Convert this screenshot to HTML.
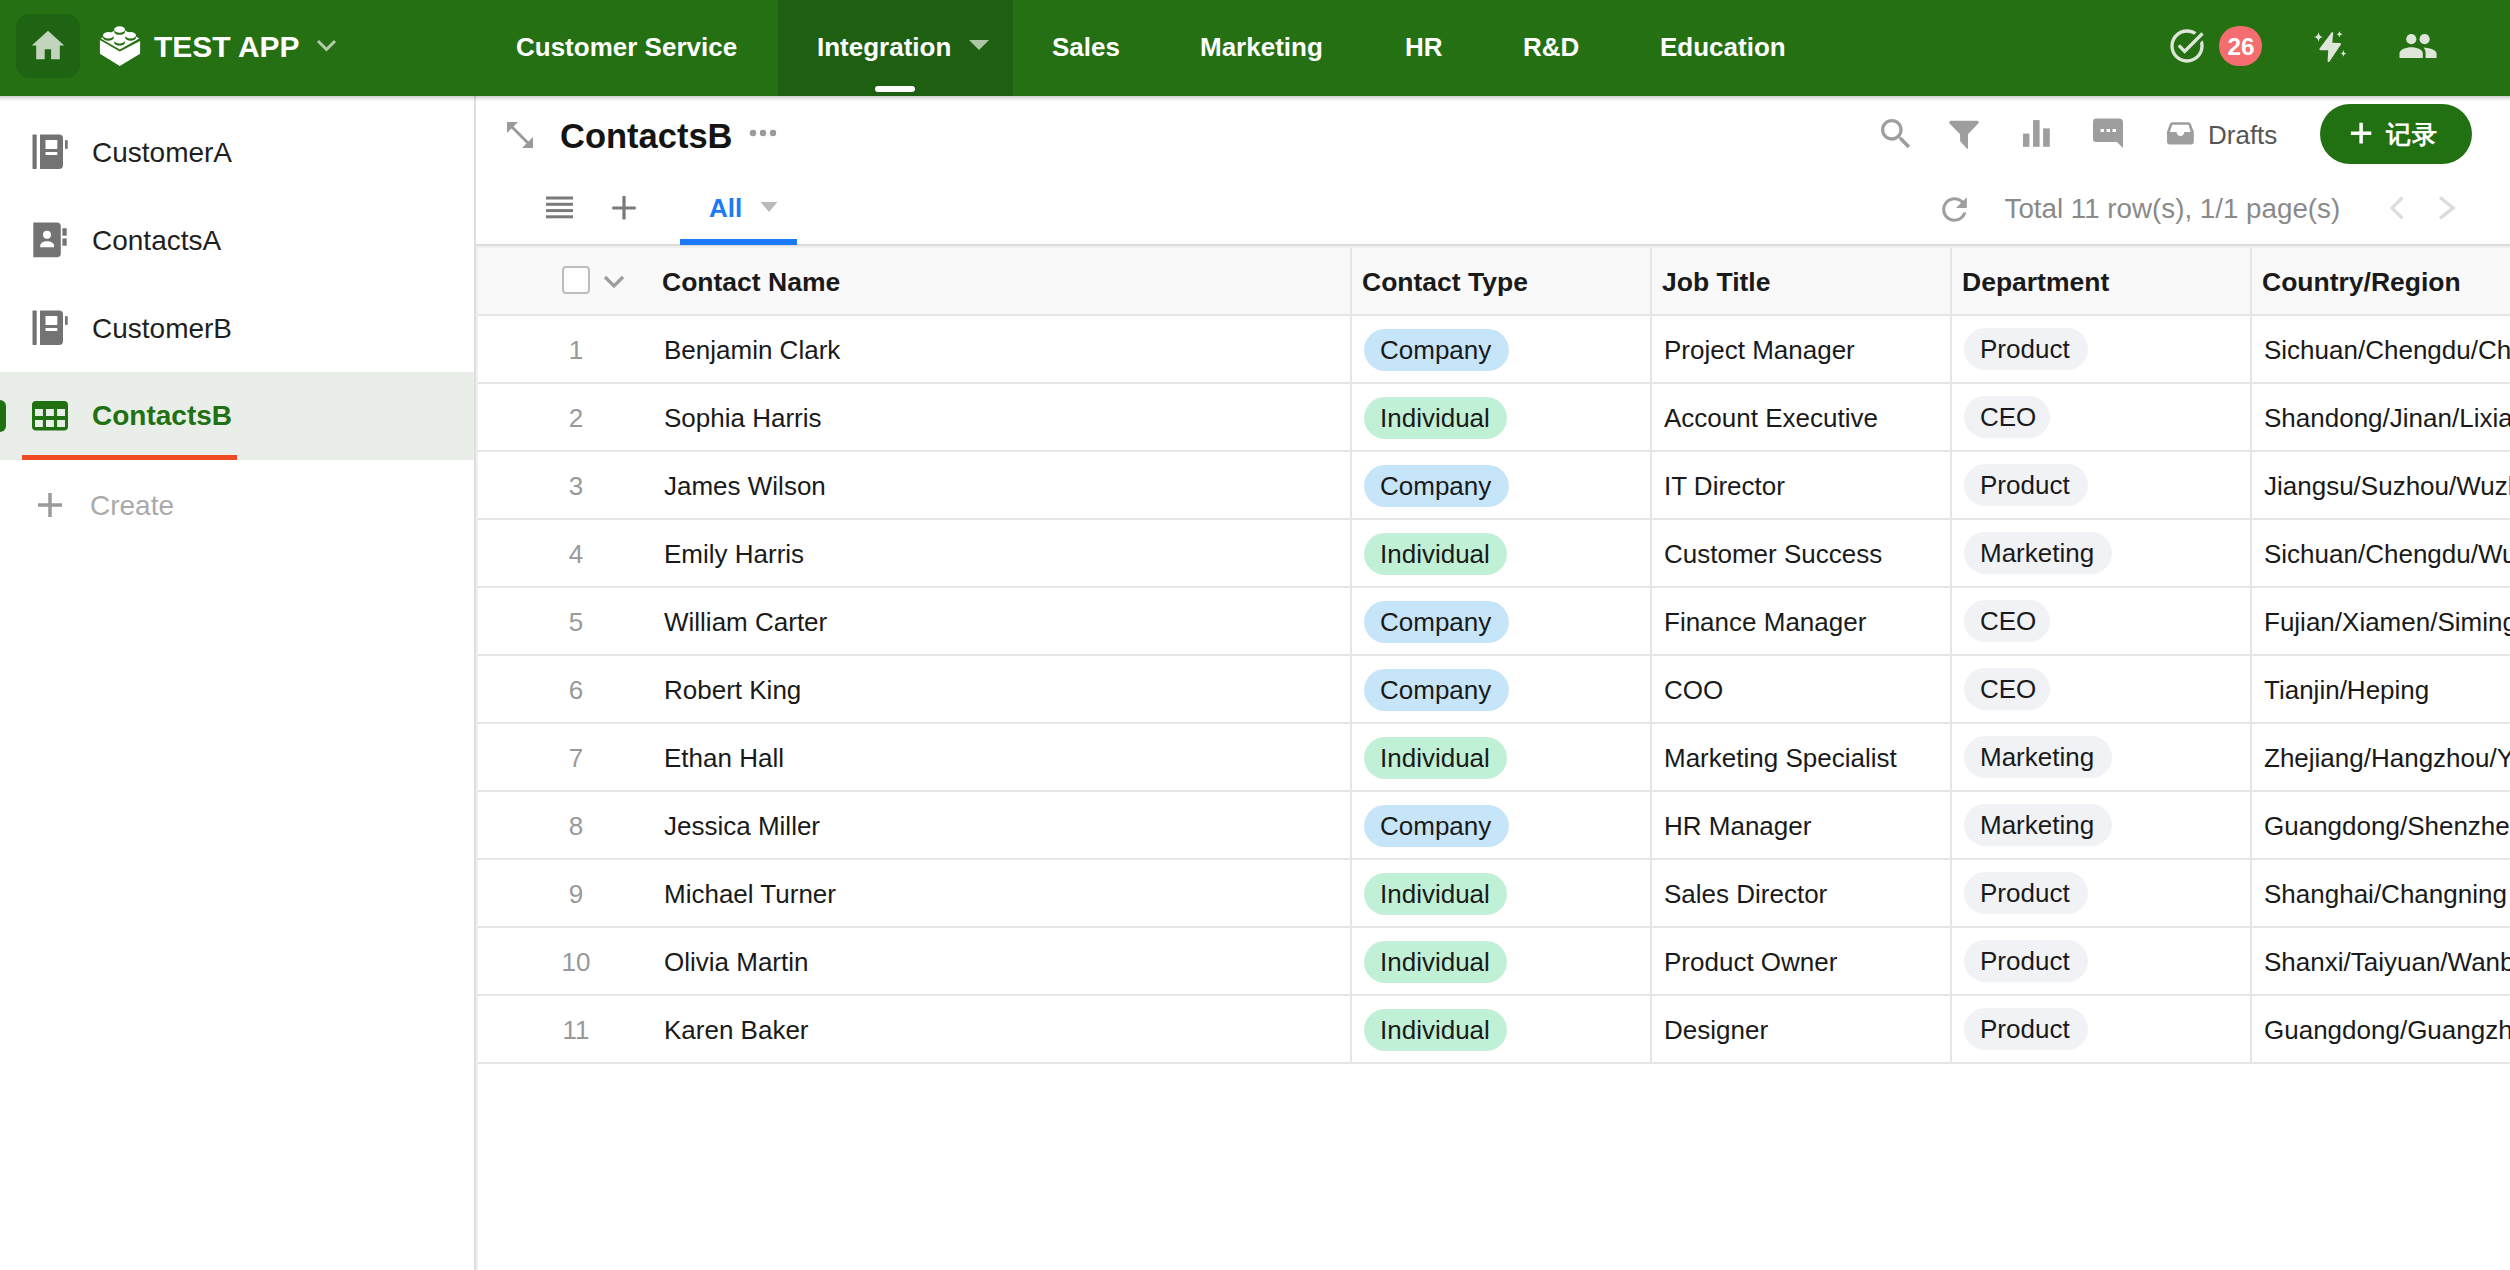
<!DOCTYPE html>
<html><head><meta charset="utf-8"><title>ContactsB</title>
<style>
*{box-sizing:border-box;margin:0;padding:0}
html,body{width:2510px;height:1270px;overflow:hidden;background:#fff;font-family:"Liberation Sans",sans-serif;color:#1a1a1a}
.t{position:absolute;line-height:40px;height:40px;white-space:nowrap}
.a{position:absolute}
svg{position:absolute;overflow:visible}
#hdr{position:absolute;left:0;top:0;width:2510px;height:96px;background:#247013}
#shadow{position:absolute;left:0;top:96px;width:2510px;height:6px;z-index:3;background:linear-gradient(rgba(0,0,0,.2),rgba(0,0,0,.06) 55%,rgba(0,0,0,0))}
.pill{position:absolute;height:42px;border-radius:21px}
</style></head><body>
<div id="hdr"><div class="a" style="left:16px;top:14px;width:64px;height:64px;border-radius:14px;background:#1f6412"></div><svg style="left:31px;top:30px" width="34" height="30" viewBox="0 0 34 30"><path d="M17 0.8 L0.8 15.6 H5.2 V29.2 H13.7 V19.3 H20.1 V29.2 H28.8 V15.6 H33.2 Z" fill="#c3d4bc"/></svg><svg style="left:95px;top:20px" width="50" height="50" viewBox="0 0 50 50">
<path d="M4.9 20.1 L24.8 31.5 L45.1 20.9 V33.7 L24.8 45.9 L4.9 33.7 Z" fill="#fff"/>
<path d="M5.7 18.5 L24.8 7.5 L44.3 18.4 L24.8 29.4 Z" fill="#fff"/>
<g>
<ellipse cx="24.6" cy="11.65" rx="5.4" ry="3.2" fill="#247013"/><ellipse cx="24.6" cy="9.45" rx="5.4" ry="3.2" fill="#fff"/>
<ellipse cx="13.4" cy="17.5" rx="5.4" ry="3.2" fill="#247013"/><ellipse cx="13.4" cy="15.2" rx="5.4" ry="3.2" fill="#fff"/>
<ellipse cx="35.6" cy="17.5" rx="5.4" ry="3.2" fill="#247013"/><ellipse cx="35.6" cy="15.2" rx="5.4" ry="3.2" fill="#fff"/>
<ellipse cx="24.6" cy="22.4" rx="5.4" ry="3.2" fill="#247013"/><ellipse cx="24.6" cy="20.2" rx="5.4" ry="3.2" fill="#fff"/>
</g>
</svg><div class="t" style="left:154px;top:26.8px;font-size:30px;font-weight:700;color:#fff;">TEST APP</div>
<svg style="left:316px;top:39px" width="21" height="13" viewBox="0 0 21 13"><path d="M2 2 L10.5 10.5 L19 2" fill="none" stroke="#b3ccab" stroke-width="3"/></svg><div class="a" style="left:778px;top:0;width:235px;height:96px;background:#1f5f12"></div><div class="a" style="left:875px;top:86px;width:40px;height:6px;border-radius:3px;background:#fff"></div><div class="t" style="left:516px;top:27.2px;font-size:26px;font-weight:700;color:#fff;">Customer Service</div>
<div class="t" style="left:817px;top:27.2px;font-size:26px;font-weight:700;color:#fff;">Integration</div>
<div class="t" style="left:1052px;top:27.2px;font-size:26px;font-weight:700;color:#fff;">Sales</div>
<div class="t" style="left:1200px;top:27.2px;font-size:26px;font-weight:700;color:#fff;">Marketing</div>
<div class="t" style="left:1405px;top:27.2px;font-size:26px;font-weight:700;color:#fff;">HR</div>
<div class="t" style="left:1523px;top:27.2px;font-size:26px;font-weight:700;color:#fff;">R&amp;D</div>
<div class="t" style="left:1660px;top:27.2px;font-size:26px;font-weight:700;color:#fff;">Education</div>
<svg style="left:968px;top:39px" width="22" height="12" viewBox="0 0 22 12"><path d="M1 1 H21 L11 11 Z" fill="#adc6a6"/></svg><svg style="left:2167px;top:26px" width="40" height="40" viewBox="0 0 24 24"><path fill="#dde6d9" d="M22 5.18L10.59 16.6l-4.24-4.24 1.41-1.41 2.83 2.83 10-10L22 5.18zm-2.21 5.04c.13.57.21 1.17.21 1.78 0 4.42-3.58 8-8 8s-8-3.58-8-8 3.58-8 8-8c1.58 0 3.04.46 4.28 1.25l1.44-1.44C16.1 2.67 14.130 2 12 2 6.48 2 2 6.48 2 12s4.48 10 10 10 10-4.48 10-10c0-1.19-.22-2.33-.6-3.39l-1.61 1.61z"/></svg><div class="a" style="left:2219px;top:26px;width:43px;height:40px;border-radius:20px;background:#f56d6f"></div><div class="t" style="left:2227.5px;top:27.2px;font-size:24.3px;font-weight:700;color:#fff;">26</div>
<svg style="left:2300px;top:20px" width="60" height="50" viewBox="0 0 60 50">
<path d="M31.5 12.5 Q32.5 11.2 33.2 12.8 L32.3 22.8 L40 23 Q41.5 23.3 40.8 24.8 L29.5 41.5 Q28.2 42.8 27.6 41.2 L28.2 30.2 L20.5 30.2 Q18.6 30 19.6 28.5 Z" fill="#dde6d9"/>
<path d="M18.5 12 Q19 16.5 23 17 Q19 17.5 18.5 22 Q18 17.5 14 17 Q18 16.5 18.5 12 Z" fill="#dde6d9"/>
<path d="M39.4 11 Q39.7 13.9 42.4 14.3 Q39.7 14.7 39.4 17.6 Q39.1 14.7 36.3 14.3 Q39.1 13.9 39.4 11 Z" fill="#dde6d9"/>
<path d="M43.4 30.2 Q43.7 33.1 46.4 33.5 Q43.7 33.9 43.4 36.8 Q43.1 33.9 40.3 33.5 Q43.1 33.1 43.4 30.2 Z" fill="#dde6d9"/>
</svg><svg style="left:2398px;top:33px" width="40" height="26" viewBox="0 0 40 26">
<circle cx="13.3" cy="6.2" r="5.1" fill="#dde6d9"/>
<circle cx="26.6" cy="6.2" r="5.1" fill="#dde6d9"/>
<path d="M1.5 25 V20.5 C1.5 16.5 8 14.3 13.2 14.3 C18.5 14.3 24.8 16.5 24.8 20.5 V25 Z" fill="#dde6d9"/>
<path d="M25.5 14.6 C31 14.9 38.6 16.8 38.6 20.8 V25 H27.6 V20.5 C27.6 18 26.8 16 25.5 14.6 Z" fill="#dde6d9"/>
</svg></div><div id="shadow"></div><div class="a" style="left:474px;top:96px;width:2px;height:1174px;background:#dedede"></div><div class="a" style="left:0;top:372px;width:474px;height:88px;background:#e9eee8"></div><div class="a" style="left:-6px;top:400px;width:12px;height:32px;border-radius:6px;background:#217012"></div><div class="a" style="left:22px;top:455px;width:215px;height:5px;background:#ef4a24"></div><svg style="left:32px;top:134px" width="36" height="36" viewBox="0 0 36 36"><g fill="#737373">
<rect x="0.5" y="0.4" width="4.2" height="34.7" rx="0.8"/>
<path d="M8 0.4 H27 Q31 0.4 31 4.4 V31.1 Q31 35.1 27 35.1 H8 Z M13.5 6 V15 H25.3 V6 Z M13.5 18 V21.1 H25.3 V18 Z" fill-rule="evenodd"/>
<rect x="33" y="6.2" width="2.7" height="8.6"/>
</g></svg><div class="t" style="left:92px;top:132.8px;font-size:28px;font-weight:400;color:#1f1f1f;">CustomerA</div>
<svg style="left:32px;top:222px" width="36" height="36" viewBox="0 0 36 36"><g fill="#737373">
<path d="M1.3 0.5 H24.8 Q28.8 0.5 28.8 4.5 V31.3 Q28.8 35.3 24.8 35.3 H1.3 Z" />
<rect x="30.4" y="6.2" width="4.3" height="7.5"/>
<rect x="30.4" y="16.4" width="4.3" height="7.3"/>
</g>
<circle cx="15" cy="12.7" r="4" fill="#fff"/>
<path d="M8.2 25.3 V23.8 C8.2 20.5 12 19.2 15 19.2 C18 19.2 22.1 20.5 22.1 23.8 V25.3 Z" fill="#fff"/>
</svg><div class="t" style="left:92px;top:220.8px;font-size:28px;font-weight:400;color:#1f1f1f;">ContactsA</div>
<svg style="left:32px;top:310px" width="36" height="36" viewBox="0 0 36 36"><g fill="#737373">
<rect x="0.5" y="0.4" width="4.2" height="34.7" rx="0.8"/>
<path d="M8 0.4 H27 Q31 0.4 31 4.4 V31.1 Q31 35.1 27 35.1 H8 Z M13.5 6 V15 H25.3 V6 Z M13.5 18 V21.1 H25.3 V18 Z" fill-rule="evenodd"/>
<rect x="33" y="6.2" width="2.7" height="8.6"/>
</g></svg><div class="t" style="left:92px;top:308.8px;font-size:28px;font-weight:400;color:#1f1f1f;">CustomerB</div>
<svg style="left:32px;top:401px" width="36" height="30" viewBox="0 0 36 30">
<path fill="#217012" fill-rule="evenodd" d="M4 0 H32 Q36 0 36 4 V25.6 Q36 29.6 32 29.6 H4 Q0 29.6 0 25.6 V4 Q0 0 4 0 Z M3 7.9 V15 H10.9 V7.9 Z M14 7.9 V15 H21.9 V7.9 Z M25.1 7.9 V15 H33 V7.9 Z M3 18.9 V26 H10.9 V18.9 Z M14 18.9 V26 H21.9 V18.9 Z M25.1 18.9 V26 H33 V18.9 Z"/>
</svg><div class="t" style="left:92px;top:396.1px;font-size:28px;font-weight:700;color:#217012;">ContactsB</div>
<svg style="left:37px;top:492px" width="26" height="26" viewBox="0 0 26 26"><path d="M13 1 V25 M1 13 H25" stroke="#9b9b9b" stroke-width="3.5"/></svg><div class="t" style="left:90px;top:485.9px;font-size:28px;font-weight:400;color:#aaaaaa;">Create</div>
<svg style="left:506px;top:121px" width="28" height="28" viewBox="0 0 28 28"><g fill="#9a9a9a">
<path d="M1 1 H12 L1 12 Z"/><path d="M27 27 H16 L27 16 Z"/>
<path d="M4.5 6.6 L6.6 4.5 L23.5 21.4 L21.4 23.5 Z"/>
</g></svg><div class="t" style="left:560px;top:115.8px;font-size:34.5px;font-weight:700;color:#141414;">ContactsB</div>
<svg style="left:749px;top:127px" width="30" height="12" viewBox="0 0 30 12"><g fill="#9a9a9a"><circle cx="4" cy="6" r="3.2"/><circle cx="14" cy="6" r="3.2"/><circle cx="24" cy="6" r="3.2"/></g></svg><svg style="left:1876px;top:114px" width="40" height="40" viewBox="0 0 24 24"><path fill="#9e9e9e" d="M15.5 14h-.79l-.28-.27C15.41 12.59 16 11.11 16 9.5 16 5.91 13.09 3 9.5 3S3 5.91 3 9.5 5.91 16 9.5 16c1.61 0 3.09-.59 4.23-1.57l.27.28v.79l5 4.99L20.49 19l-4.99-5zm-6 0C7.010 14 5 11.99 5 9.5S7.01 5 9.5 5 14 7.01 14 9.5 11.99 14 9.5 14z"/></svg><svg style="left:1948px;top:120px" width="32" height="30" viewBox="0 0 32 30"><path fill="#9e9e9e" d="M1.5 3.5 Q0.5 1 3 0.8 H29 Q31.5 1 30.4 3.3 L20 14.3 V28 Q19.8 29.6 18.7 28.4 L12.1 21 V14.3 Z"/></svg><svg style="left:2022px;top:120px" width="30" height="28" viewBox="0 0 30 28"><g fill="#9e9e9e"><rect x="1" y="13.6" width="6.4" height="13.2"/><rect x="11" y="0.1" width="6.6" height="26.7"/><rect x="21.1" y="8.4" width="6.7" height="18.4"/></g></svg><svg style="left:2092px;top:118px" width="32" height="32" viewBox="0 0 32 32"><path fill="#9e9e9e" fill-rule="evenodd" d="M4 0.5 H27 Q31 0.5 31 4.5 V30 L25 24 H4 Q1 24 1 21 V4.5 Q1 0.5 4 0.5 Z M8.6 10.9 V14 H12 V10.9 Z M14.6 10.9 V14 H18 V10.9 Z M20.5 10.9 V14 H24 V10.9 Z"/></svg><svg style="left:2166px;top:121px" width="28" height="25" viewBox="0 0 28 25"><path fill="#9e9e9e" fill-rule="evenodd" d="M6 1.2 H22.6 Q24.2 1.2 24.8 3 L27.8 10.8 V20.6 Q27.8 23.6 24.8 23.6 H4 Q1 23.6 1 20.6 V10.8 L3.8 3 Q4.4 1.2 6 1.2 Z M6.3 3.8 H22.5 L24.6 11 H18.3 Q17.8 15 14.4 15 Q11 15 10.5 11 H3.8 Z"/></svg><div class="t" style="left:2208px;top:115.1px;font-size:26px;font-weight:400;color:#555555;">Drafts</div>
<div class="a" style="left:2320px;top:104px;width:152px;height:60px;border-radius:30px;background:#217012"></div><svg style="left:2350px;top:122px" width="22" height="22" viewBox="0 0 22 22"><path d="M11.1 0.8 V21.5 M0.9 11.2 H21.3" stroke="#fff" stroke-width="3.5"/></svg><div class="t" style="left:2385.5px;top:114.0px;font-size:25px;font-weight:600;color:#fff;letter-spacing:1.5px">记录</div>
<svg style="left:545px;top:195px" width="30" height="26" viewBox="0 0 30 26"><g fill="#7a7a7a"><rect x="1" y="1.5" width="27" height="3"/><rect x="1" y="7.8" width="27" height="3"/><rect x="1" y="14.1" width="27" height="3"/><rect x="1" y="20.3" width="27" height="3"/></g></svg><svg style="left:610px;top:194px" width="28" height="28" viewBox="0 0 28 28"><path d="M14 2 V25.6 M2.3 14 H25.7" stroke="#7a7a7a" stroke-width="3.2"/></svg><div class="t" style="left:709px;top:188.2px;font-size:26px;font-weight:700;color:#1a7af8;">All</div>
<svg style="left:760px;top:201px" width="18" height="12" viewBox="0 0 18 12"><path d="M0.5 1 H17.5 L9 11 Z" fill="#bbbbbb"/></svg><svg style="left:1936px;top:191px" width="37" height="37" viewBox="0 0 24 24"><path fill="#9e9e9e" d="M17.65 6.35C16.2 4.9 14.21 4 12 4c-4.42 0-7.99 3.58-7.99 8s3.57 8 7.99 8c3.73 0 6.84-2.55 7.73-6h-2.08c-.82 2.33-3.04 4-5.65 4-3.31 0-6-2.690-6-6s2.69-6 6-6c1.66 0 3.14.69 4.22 1.78L13 11h7V4l-2.35 2.35z"/></svg><div class="t" style="left:2004.5px;top:188.6px;font-size:27.75px;font-weight:400;color:#8a8a8a;">Total 11 row(s), 1/1 page(s)</div>
<svg style="left:2388px;top:195px" width="18" height="26" viewBox="0 0 18 26"><path d="M14.5 2.5 L4 12.9 L14.5 23.3" fill="none" stroke="#dcdcdc" stroke-width="3.2"/></svg><svg style="left:2437px;top:195px" width="20" height="26" viewBox="0 0 20 26"><path d="M3 2.5 L16.2 12.9 L3 23.3" fill="none" stroke="#dcdcdc" stroke-width="3.4"/></svg><div class="a" style="left:476px;top:244px;width:2034px;height:2px;background:#dcdcdc"></div><div class="a" style="left:680px;top:239px;width:117px;height:6px;background:#1a7af8"></div><div class="a" style="left:476px;top:246px;width:2034px;height:2px;background:#efefef"></div><div class="a" style="left:476px;top:246px;width:2px;height:1024px;background:#efefef"></div><div class="a" style="left:478px;top:248px;width:2032px;height:66px;background:#f9f9f9"></div><div class="a" style="left:478px;top:314px;width:2032px;height:2px;background:#e5e5e5"></div><div class="a" style="left:478px;top:382px;width:2032px;height:2px;background:#e5e5e5"></div><div class="a" style="left:478px;top:450px;width:2032px;height:2px;background:#e5e5e5"></div><div class="a" style="left:478px;top:518px;width:2032px;height:2px;background:#e5e5e5"></div><div class="a" style="left:478px;top:586px;width:2032px;height:2px;background:#e5e5e5"></div><div class="a" style="left:478px;top:654px;width:2032px;height:2px;background:#e5e5e5"></div><div class="a" style="left:478px;top:722px;width:2032px;height:2px;background:#e5e5e5"></div><div class="a" style="left:478px;top:790px;width:2032px;height:2px;background:#e5e5e5"></div><div class="a" style="left:478px;top:858px;width:2032px;height:2px;background:#e5e5e5"></div><div class="a" style="left:478px;top:926px;width:2032px;height:2px;background:#e5e5e5"></div><div class="a" style="left:478px;top:994px;width:2032px;height:2px;background:#e5e5e5"></div><div class="a" style="left:478px;top:1062px;width:2032px;height:2px;background:#e5e5e5"></div><div class="a" style="left:1350px;top:248px;width:2px;height:816px;background:#e6e6e6"></div><div class="a" style="left:1650px;top:248px;width:2px;height:816px;background:#e6e6e6"></div><div class="a" style="left:1950px;top:248px;width:2px;height:816px;background:#e6e6e6"></div><div class="a" style="left:2250px;top:248px;width:2px;height:816px;background:#e6e6e6"></div><div class="a" style="left:562px;top:266px;width:28px;height:28px;border:2px solid #bdbdbd;border-radius:4px;background:#fff"></div><svg style="left:603px;top:275px" width="22" height="14" viewBox="0 0 22 14"><path d="M2 2 L11 11 L20 2" fill="none" stroke="#9e9e9e" stroke-width="3.3"/></svg><div class="t" style="left:662px;top:261.8px;font-size:26.5px;font-weight:700;color:#1a1a1a;">Contact Name</div>
<div class="t" style="left:1362px;top:261.8px;font-size:26.5px;font-weight:700;color:#1a1a1a;">Contact Type</div>
<div class="t" style="left:1662px;top:261.8px;font-size:26.5px;font-weight:700;color:#1a1a1a;">Job Title</div>
<div class="t" style="left:1962px;top:261.8px;font-size:26.5px;font-weight:700;color:#1a1a1a;">Department</div>
<div class="t" style="left:2262px;top:261.8px;font-size:26.5px;font-weight:700;color:#1a1a1a;">Country/Region</div>
<div class="t" style="left:536px;top:330.0px;width:80px;text-align:center;font-size:26px;color:#999">1</div><div class="t" style="left:664px;top:330.0px;font-size:26px;font-weight:400;color:#1a1a1a;">Benjamin Clark</div>
<div class="pill" style="left:1364px;top:329px;width:145px;background:#c6e5f9"></div><div class="t" style="left:1380px;top:330.0px;font-size:26px;font-weight:400;color:#1a1a1a;">Company</div>
<div class="t" style="left:1664px;top:330.0px;font-size:26px;font-weight:400;color:#1a1a1a;">Project Manager</div>
<div class="pill" style="left:1964px;top:328px;width:124px;background:#f0f2f6"></div><div class="t" style="left:1980px;top:329.0px;font-size:26px;font-weight:400;color:#1a1a1a;">Product</div>
<div class="t" style="left:2264px;top:330.0px;font-size:26px;width:246px;overflow:hidden">Sichuan/Chengdu/Chenghua</div><div class="t" style="left:536px;top:398.0px;width:80px;text-align:center;font-size:26px;color:#999">2</div><div class="t" style="left:664px;top:398.0px;font-size:26px;font-weight:400;color:#1a1a1a;">Sophia Harris</div>
<div class="pill" style="left:1364px;top:397px;width:143px;background:#c0f0d5"></div><div class="t" style="left:1380px;top:398.0px;font-size:26px;font-weight:400;color:#1a1a1a;">Individual</div>
<div class="t" style="left:1664px;top:398.0px;font-size:26px;font-weight:400;color:#1a1a1a;">Account Executive</div>
<div class="pill" style="left:1964px;top:396px;width:86px;background:#f0f2f6"></div><div class="t" style="left:1980px;top:397.0px;font-size:26px;font-weight:400;color:#1a1a1a;">CEO</div>
<div class="t" style="left:2264px;top:398.0px;font-size:26px;width:246px;overflow:hidden">Shandong/Jinan/Lixia</div><div class="t" style="left:536px;top:466.0px;width:80px;text-align:center;font-size:26px;color:#999">3</div><div class="t" style="left:664px;top:466.0px;font-size:26px;font-weight:400;color:#1a1a1a;">James Wilson</div>
<div class="pill" style="left:1364px;top:465px;width:145px;background:#c6e5f9"></div><div class="t" style="left:1380px;top:466.0px;font-size:26px;font-weight:400;color:#1a1a1a;">Company</div>
<div class="t" style="left:1664px;top:466.0px;font-size:26px;font-weight:400;color:#1a1a1a;">IT Director</div>
<div class="pill" style="left:1964px;top:464px;width:124px;background:#f0f2f6"></div><div class="t" style="left:1980px;top:465.0px;font-size:26px;font-weight:400;color:#1a1a1a;">Product</div>
<div class="t" style="left:2264px;top:466.0px;font-size:26px;width:246px;overflow:hidden">Jiangsu/Suzhou/Wuzhong</div><div class="t" style="left:536px;top:534.0px;width:80px;text-align:center;font-size:26px;color:#999">4</div><div class="t" style="left:664px;top:534.0px;font-size:26px;font-weight:400;color:#1a1a1a;">Emily Harris</div>
<div class="pill" style="left:1364px;top:533px;width:143px;background:#c0f0d5"></div><div class="t" style="left:1380px;top:534.0px;font-size:26px;font-weight:400;color:#1a1a1a;">Individual</div>
<div class="t" style="left:1664px;top:534.0px;font-size:26px;font-weight:400;color:#1a1a1a;">Customer Success</div>
<div class="pill" style="left:1964px;top:532px;width:148px;background:#f0f2f6"></div><div class="t" style="left:1980px;top:533.0px;font-size:26px;font-weight:400;color:#1a1a1a;">Marketing</div>
<div class="t" style="left:2264px;top:534.0px;font-size:26px;width:246px;overflow:hidden">Sichuan/Chengdu/Wuhou</div><div class="t" style="left:536px;top:602.0px;width:80px;text-align:center;font-size:26px;color:#999">5</div><div class="t" style="left:664px;top:602.0px;font-size:26px;font-weight:400;color:#1a1a1a;">William Carter</div>
<div class="pill" style="left:1364px;top:601px;width:145px;background:#c6e5f9"></div><div class="t" style="left:1380px;top:602.0px;font-size:26px;font-weight:400;color:#1a1a1a;">Company</div>
<div class="t" style="left:1664px;top:602.0px;font-size:26px;font-weight:400;color:#1a1a1a;">Finance Manager</div>
<div class="pill" style="left:1964px;top:600px;width:86px;background:#f0f2f6"></div><div class="t" style="left:1980px;top:601.0px;font-size:26px;font-weight:400;color:#1a1a1a;">CEO</div>
<div class="t" style="left:2264px;top:602.0px;font-size:26px;width:246px;overflow:hidden">Fujian/Xiamen/Siming</div><div class="t" style="left:536px;top:670.0px;width:80px;text-align:center;font-size:26px;color:#999">6</div><div class="t" style="left:664px;top:670.0px;font-size:26px;font-weight:400;color:#1a1a1a;">Robert King</div>
<div class="pill" style="left:1364px;top:669px;width:145px;background:#c6e5f9"></div><div class="t" style="left:1380px;top:670.0px;font-size:26px;font-weight:400;color:#1a1a1a;">Company</div>
<div class="t" style="left:1664px;top:670.0px;font-size:26px;font-weight:400;color:#1a1a1a;">COO</div>
<div class="pill" style="left:1964px;top:668px;width:86px;background:#f0f2f6"></div><div class="t" style="left:1980px;top:669.0px;font-size:26px;font-weight:400;color:#1a1a1a;">CEO</div>
<div class="t" style="left:2264px;top:670.0px;font-size:26px;width:246px;overflow:hidden">Tianjin/Heping</div><div class="t" style="left:536px;top:738.0px;width:80px;text-align:center;font-size:26px;color:#999">7</div><div class="t" style="left:664px;top:738.0px;font-size:26px;font-weight:400;color:#1a1a1a;">Ethan Hall</div>
<div class="pill" style="left:1364px;top:737px;width:143px;background:#c0f0d5"></div><div class="t" style="left:1380px;top:738.0px;font-size:26px;font-weight:400;color:#1a1a1a;">Individual</div>
<div class="t" style="left:1664px;top:738.0px;font-size:26px;font-weight:400;color:#1a1a1a;">Marketing Specialist</div>
<div class="pill" style="left:1964px;top:736px;width:148px;background:#f0f2f6"></div><div class="t" style="left:1980px;top:737.0px;font-size:26px;font-weight:400;color:#1a1a1a;">Marketing</div>
<div class="t" style="left:2264px;top:738.0px;font-size:26px;width:246px;overflow:hidden">Zhejiang/Hangzhou/Yuhang</div><div class="t" style="left:536px;top:806.0px;width:80px;text-align:center;font-size:26px;color:#999">8</div><div class="t" style="left:664px;top:806.0px;font-size:26px;font-weight:400;color:#1a1a1a;">Jessica Miller</div>
<div class="pill" style="left:1364px;top:805px;width:145px;background:#c6e5f9"></div><div class="t" style="left:1380px;top:806.0px;font-size:26px;font-weight:400;color:#1a1a1a;">Company</div>
<div class="t" style="left:1664px;top:806.0px;font-size:26px;font-weight:400;color:#1a1a1a;">HR Manager</div>
<div class="pill" style="left:1964px;top:804px;width:148px;background:#f0f2f6"></div><div class="t" style="left:1980px;top:805.0px;font-size:26px;font-weight:400;color:#1a1a1a;">Marketing</div>
<div class="t" style="left:2264px;top:806.0px;font-size:26px;width:246px;overflow:hidden">Guangdong/Shenzhen/Nanshan</div><div class="t" style="left:536px;top:874.0px;width:80px;text-align:center;font-size:26px;color:#999">9</div><div class="t" style="left:664px;top:874.0px;font-size:26px;font-weight:400;color:#1a1a1a;">Michael Turner</div>
<div class="pill" style="left:1364px;top:873px;width:143px;background:#c0f0d5"></div><div class="t" style="left:1380px;top:874.0px;font-size:26px;font-weight:400;color:#1a1a1a;">Individual</div>
<div class="t" style="left:1664px;top:874.0px;font-size:26px;font-weight:400;color:#1a1a1a;">Sales Director</div>
<div class="pill" style="left:1964px;top:872px;width:124px;background:#f0f2f6"></div><div class="t" style="left:1980px;top:873.0px;font-size:26px;font-weight:400;color:#1a1a1a;">Product</div>
<div class="t" style="left:2264px;top:874.0px;font-size:26px;width:246px;overflow:hidden">Shanghai/Changning</div><div class="t" style="left:536px;top:942.0px;width:80px;text-align:center;font-size:26px;color:#999">10</div><div class="t" style="left:664px;top:942.0px;font-size:26px;font-weight:400;color:#1a1a1a;">Olivia Martin</div>
<div class="pill" style="left:1364px;top:941px;width:143px;background:#c0f0d5"></div><div class="t" style="left:1380px;top:942.0px;font-size:26px;font-weight:400;color:#1a1a1a;">Individual</div>
<div class="t" style="left:1664px;top:942.0px;font-size:26px;font-weight:400;color:#1a1a1a;">Product Owner</div>
<div class="pill" style="left:1964px;top:940px;width:124px;background:#f0f2f6"></div><div class="t" style="left:1980px;top:941.0px;font-size:26px;font-weight:400;color:#1a1a1a;">Product</div>
<div class="t" style="left:2264px;top:942.0px;font-size:26px;width:246px;overflow:hidden">Shanxi/Taiyuan/Wanbailin</div><div class="t" style="left:536px;top:1010.0px;width:80px;text-align:center;font-size:26px;color:#999">11</div><div class="t" style="left:664px;top:1010.0px;font-size:26px;font-weight:400;color:#1a1a1a;">Karen Baker</div>
<div class="pill" style="left:1364px;top:1009px;width:143px;background:#c0f0d5"></div><div class="t" style="left:1380px;top:1010.0px;font-size:26px;font-weight:400;color:#1a1a1a;">Individual</div>
<div class="t" style="left:1664px;top:1010.0px;font-size:26px;font-weight:400;color:#1a1a1a;">Designer</div>
<div class="pill" style="left:1964px;top:1008px;width:124px;background:#f0f2f6"></div><div class="t" style="left:1980px;top:1009.0px;font-size:26px;font-weight:400;color:#1a1a1a;">Product</div>
<div class="t" style="left:2264px;top:1010.0px;font-size:26px;width:246px;overflow:hidden">Guangdong/Guangzhou/Tianhe</div></body></html>
